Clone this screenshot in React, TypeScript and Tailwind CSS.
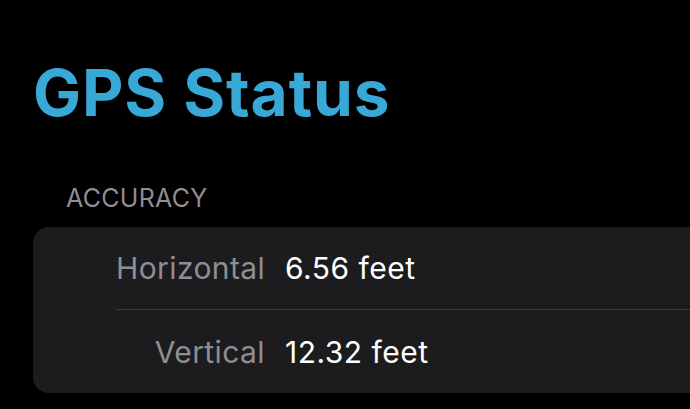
import React from "react";

export default function App() {
  return (
    <div
      className="w-[690px] h-[409px] bg-black overflow-hidden"
      style={{ fontFamily: "Inter, 'Noto Sans', sans-serif" }}
    >
      <h1 className="pl-[33px] pt-[61px] text-[64px] leading-none font-bold text-[#38a9d6] tracking-[0.9px]">
        GPS Status
      </h1>
      <div className="pl-[66px] mt-[61px] text-[25px] leading-none text-[#8e8e93] tracking-[0.3px]">
        ACCURACY
      </div>
      <div className="ml-[33px] mt-[16px] bg-[#1c1c1e] rounded-l-[16px] flex flex-col">
        <div className="flex items-center h-[82px] pl-[83px]">
          <div className="w-[149px] text-right text-[30px] leading-none text-[#8e8e93] tracking-[0.4px]">
            Horizontal
          </div>
          <div className="ml-[20px] text-[30px] leading-none text-white tracking-[0.5px]">6.56 feet</div>
        </div>
        <div className="ml-[83px] h-px bg-[#3a3a3c]" />
        <div className="flex items-center h-[83px] pl-[83px]">
          <div className="w-[149px] text-right text-[30px] leading-none text-[#8e8e93] tracking-[0.4px]">
            Vertical
          </div>
          <div className="ml-[20px] text-[30px] leading-none text-white tracking-[0.5px]">12.32 feet</div>
        </div>
      </div>
    </div>
  );
}
